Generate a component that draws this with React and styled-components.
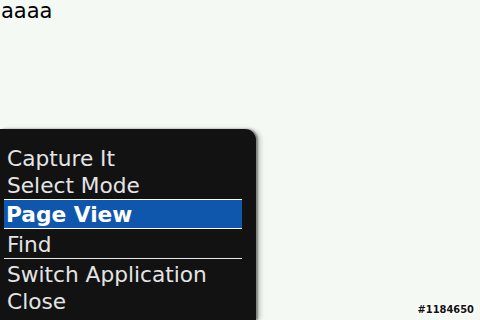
import styled, { createGlobalStyle } from "styled-components"

const Global = createGlobalStyle`
  html, body {
    margin: 0;
    padding: 0;
    background: #f4f9f4;
  }
`

const Screen = styled.div`
  width: 480px;
  height: 320px;
  overflow: hidden;
  display: flex;
  flex-direction: column;
  background: #f4f9f4;
`
const Title = styled.div`
  font-family: "DejaVu Sans", sans-serif;
  font-size: 21px;
  line-height: 22px;
  height: 22px;
  color: #000;
  padding-left: 1px;
`
const Bottom = styled.div`
  flex: 1;
  display: flex;
  align-items: stretch;
  justify-content: space-between;
  padding-top: 107px;
  min-height: 0;
`
const Menu = styled.div`
  width: 256px;
  background: #121212;
  border-top-right-radius: 11px;
  box-shadow: 2px 0 2px rgba(60, 60, 60, 0.55), 5px 0 4px rgba(0, 0, 0, 0.15);
  padding-top: 16px;
  font-family: "DejaVu Sans", sans-serif;
  font-size: 21.7px;
`
const Item = styled.div`
  height: 27px;
  line-height: 27px;
  padding-left: 7px;
  margin-right: 14px;
  margin-top: ${(p) => (p.$gap ? "2px" : "0")};
  color: #e4e4e4;
  white-space: nowrap;
  ${(p) =>
    p.$selected &&
    `
    height: 28px;
    line-height: 29px;
    margin-left: 4px;
    padding-left: 2px;
    border-top: 1px solid #fff;
    border-bottom: 1px solid #fff;
    background: #0f57ad;
    color: #fff;
    font-weight: bold;
  `}
`
const Separator = styled.div`
  height: 1px;
  margin: 0 14px 0 4px;
  background: #e8e8e8;
`
const Tag = styled.div`
  align-self: flex-end;
  margin: 0 6px 4px 0;
  font-family: "DejaVu Sans Condensed", "DejaVu Sans", sans-serif;
  font-weight: bold;
  font-size: 11px;
  line-height: 12px;
  color: #111;
  text-shadow: 1px 0 0 #fff, -1px 0 0 #fff, 0 1px 0 #fff, 0 -1px 0 #fff,
    1px 1px 0 #fff, -1px -1px 0 #fff, 1px -1px 0 #fff, -1px 1px 0 #fff;
`

const items = [
  { label: "Capture It" },
  { label: "Select Mode" },
  { label: "Page View", selected: true },
  { label: "Find", gap: true, separator: true },
  { label: "Switch Application", gap: true },
  { label: "Close" },
]

export default function App() {
  return (
    <Screen>
      <Global />
      <Title>aaaa</Title>
      <Bottom>
        <Menu>
          {items.map((it) => (
            <div key={it.label}>
              <Item $selected={it.selected} $gap={it.gap}>
                {it.label}
              </Item>
              {it.separator && <Separator />}
            </div>
          ))}
        </Menu>
        <Tag>#1184650</Tag>
      </Bottom>
    </Screen>
  )
}
